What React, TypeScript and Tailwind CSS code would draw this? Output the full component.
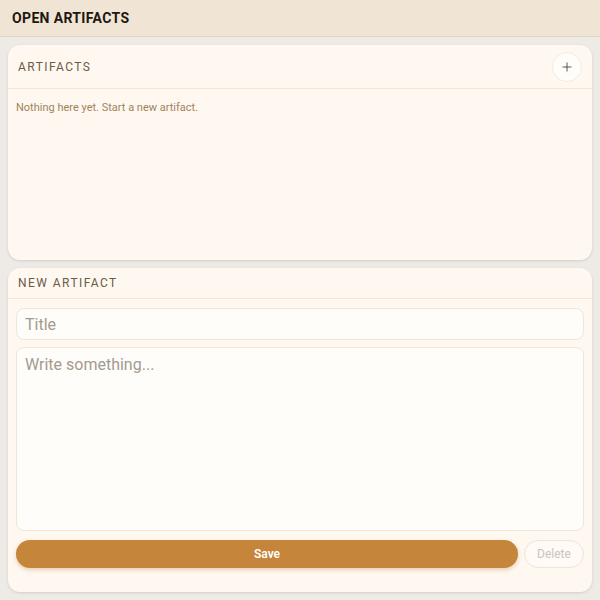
import { Plus } from "lucide-react";

export default function App() {
  return (
    <div
      className="h-[600px] flex flex-col bg-[#eeebe7] text-[#3a2e22]"
      style={{ fontFamily: "Roboto, 'Noto Sans', sans-serif" }}
    >
      {/* Header */}
      <header className="h-[37px] shrink-0 flex items-center px-3 bg-[#f0e4d4] border-b border-[#e2d5c3]">
        <h1 className="text-[14px] font-bold tracking-wide text-[#1f1710]">OPEN ARTIFACTS</h1>
      </header>

      <div className="flex-1 flex flex-col gap-2 p-2">
        {/* Artifacts list */}
        <section className="h-[215px] rounded-xl bg-[#fef8f1] shadow-[0_1px_3px_rgba(0,0,0,0.12)] flex flex-col">
          <div className="h-[44px] flex items-center justify-between pl-[10px] pr-[10px] border-b border-[#f1e8dc]">
            <h2 className="text-[12px] tracking-[0.12em] text-[#6b5a45]">ARTIFACTS</h2>
            <button className="w-[30px] h-[30px] rounded-full bg-[#fffdfa] border border-[#f2ebe1] flex items-center justify-center text-[#4a4036]">
              <Plus className="w-[14px] h-[14px]" strokeWidth={1.5} />
            </button>
          </div>
          <p className="px-2 pt-[11px] text-[11px] text-[#a3835a]">Nothing here yet. Start a new artifact.</p>
        </section>

        {/* New artifact */}
        <section className="flex-1 rounded-xl bg-[#fef8f1] shadow-[0_1px_3px_rgba(0,0,0,0.12)] flex flex-col">
          <div className="h-[31px] flex items-center px-[10px] border-b border-[#f1e8dc]">
            <h2 className="text-[12px] tracking-[0.12em] text-[#6b5a45]">NEW ARTIFACT</h2>
          </div>
          <div className="flex-1 flex flex-col gap-[7px] p-2 pt-[9px]">
            <input
              placeholder="Title"
              className="h-[32px] rounded-lg border border-[#efe6da] bg-[#fffdfa] px-2 text-[16px] placeholder:text-[#a39a90] outline-none"
            />
            <textarea
              placeholder="Write something..."
              className="h-[184px] resize-none rounded-lg border border-[#efe6da] bg-[#fffdfa] px-2 py-[5px] text-[16px] placeholder:text-[#a39a90] outline-none"
            />
            <div className="flex gap-[6px] mt-[2px]">
              <button className="flex-1 h-[28px] rounded-full bg-[#c5853a] text-white text-[12px] font-semibold shadow-[0_2px_4px_rgba(197,133,58,0.35)]">
                Save
              </button>
              <button className="w-[60px] h-[28px] rounded-full border border-[#efe5da] bg-[#fffaf5] text-[12px] text-[#cdc3ba]">
                Delete
              </button>
            </div>
          </div>
        </section>
      </div>
    </div>
  );
}
